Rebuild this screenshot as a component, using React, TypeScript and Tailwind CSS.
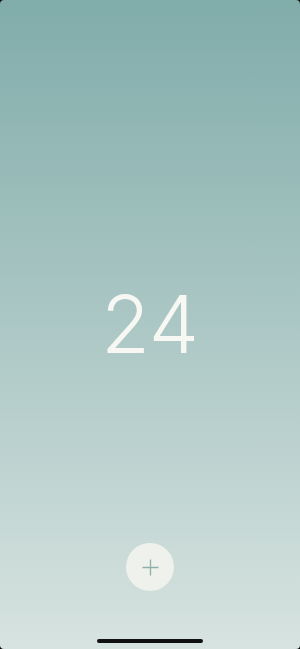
import React from 'react';

const Counter: React.FC<{ value: number }> = ({ value }) => (
  <div className="flex justify-center pt-[284px]">
    <span
      className="text-[80px] leading-none font-light text-[#f7f7f3]"
      style={{ fontFamily: 'Inter, "Helvetica Neue", sans-serif' }}
    >
      {value}
    </span>
  </div>
);

export default function App() {
  return (
    <div className="w-[300px] h-[649px] bg-black">
      <div className="w-full h-full rounded-[4px] overflow-hidden flex flex-col bg-gradient-to-b from-[#80acaa] to-[#d7e3e0]">
        <Counter value={24} />
        <div className="flex-1" />
        <div className="flex justify-center pb-[48px]">
          <button className="w-[48px] h-[48px] rounded-full bg-[#eff1ec] flex items-center justify-center">
            <svg width="17" height="17" viewBox="0 0 17 17" fill="none">
              <path d="M8.5 0.5v16M0.5 8.5h16" stroke="#8db0ad" strokeWidth="1.3" />
            </svg>
          </button>
        </div>
        <div className="flex justify-center pb-[6px]">
          <div className="w-[106px] h-[4px] rounded-full bg-[#111]" />
        </div>
      </div>
    </div>
  );
}
